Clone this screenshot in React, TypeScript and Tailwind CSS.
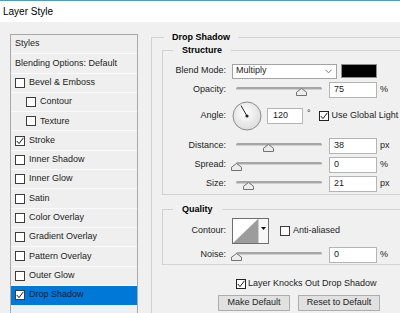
import React from 'react';

type Item = { label: string; check?: boolean; sub?: boolean; active?: boolean };

const items: Item[] = [
  { label: 'Styles' },
  { label: 'Blending Options: Default' },
  { label: 'Bevel & Emboss', check: false },
  { label: 'Contour', check: false, sub: true },
  { label: 'Texture', check: false, sub: true },
  { label: 'Stroke', check: true },
  { label: 'Inner Shadow', check: false },
  { label: 'Inner Glow', check: false },
  { label: 'Satin', check: false },
  { label: 'Color Overlay', check: false },
  { label: 'Gradient Overlay', check: false },
  { label: 'Pattern Overlay', check: false },
  { label: 'Outer Glow', check: false },
  { label: 'Drop Shadow', check: true, active: true },
];

function Check({ checked, className = '' }: { checked?: boolean; className?: string }) {
  return (
    <span className={`flex h-[10px] w-[10px] shrink-0 items-center justify-center border border-[#3c3c3c] bg-white ${className}`}>
      {checked && (
        <svg width="8" height="8" viewBox="0 0 8 8">
          <path d="M0.8 4 L3 6.6 L7.4 0.8" fill="none" stroke="#1e1e1e" strokeWidth="1" />
        </svg>
      )}
    </span>
  );
}

function Slider({ pos }: { pos: number }) {
  return (
    <div className="relative h-[16px] w-[94px] shrink-0 pt-[5px]">
      <div className="mx-[4px] h-[3px] rounded-full border-b border-[#cfcfcf] bg-[#a6a6a6]" />
      <svg className="absolute top-[6px]" style={{ left: pos - 5 }} width="11" height="8" viewBox="0 0 11 8">
        <path d="M5.5 0.5 L10.5 4.2 V7.5 H0.5 V4.2 Z" fill="#ececec" stroke="#727272" />
      </svg>
    </div>
  );
}

function Field({ value, w = 'w-[48px]' }: { value: string; w?: string }) {
  return (
    <div className={`ml-[3px] flex h-[16px] ${w} shrink-0 items-center border border-[#b4b4b4] bg-white pl-[4px]`}>
      {value}
    </div>
  );
}

function Label({ text }: { text: string }) {
  return <div className="w-[64px] shrink-0 pr-[1px] text-right">{text}</div>;
}

function SliderRow({ label, pos, value, unit, className = '' }: { label: string; pos: number; value: string; unit: string; className?: string }) {
  return (
    <div className={`flex h-[16px] items-center ${className}`}>
      <Label text={label} />
      <div className="ml-[5px]">
        <Slider pos={pos} />
      </div>
      <Field value={value} />
      <span className="ml-[3px]">{unit}</span>
    </div>
  );
}

export default function App() {
  return (
    <div className="h-[313px] w-[400px] overflow-hidden bg-[#f0f0f0] font-['Liberation_Sans',Arial,sans-serif] text-[9px] text-[#1c1c1c]">
      <div className="flex h-[22px] items-center border-t border-[#4f9fb1] bg-white pl-[3px] text-[10px] text-black">
        Layer Style
      </div>

      <div className="flex">
        {/* styles list */}
        <div className="ml-[10px] mt-[12px] h-[300px] w-[128px] shrink-0 border-l border-r border-t border-[#a9a9a9] bg-[#efefef]">
          {items.map((it) => (
            <div
              key={it.label}
              className={`flex h-[19.3px] items-center border-b ${
                it.active ? 'border-[#0078d7] bg-[#0078d7] text-[#10203a]' : 'border-[#fbfbfb]'
              } ${it.sub ? 'pl-[15px]' : 'pl-[4px]'}`}
            >
              {it.check !== undefined && <Check checked={it.check} className="mr-[4px]" />}
              <span>{it.label}</span>
            </div>
          ))}
        </div>

        {/* drop shadow panel */}
        <fieldset className="ml-[13px] mt-[9px] h-[320px] w-[280px] shrink-0 border border-[#d2d2d2] p-0">
          <legend className="ml-[12px] px-[8px] text-[9px] font-bold leading-[12px] text-black">Drop Shadow</legend>
          <div className="pl-[10px]">
            <fieldset className="mt-[1px] w-[260px] border border-[#d2d2d2] p-0 pb-[2px]">
              <legend className="ml-[10px] px-[9px] font-bold leading-[12px] text-black">Structure</legend>

              <div className="mt-[7px] flex h-[16px] items-center">
                <Label text="Blend Mode:" />
                <div className="ml-[5px] flex h-[15px] w-[105px] items-center justify-between border border-[#a3a3a3] bg-white pl-[3px] pr-[4px]">
                  <span>Multiply</span>
                  <svg width="7" height="5" viewBox="0 0 7 5">
                    <path d="M0.5 0.8 L3.5 3.8 L6.5 0.8" fill="none" stroke="#7a7a7a" />
                  </svg>
                </div>
                <div className="ml-[4px] h-[14px] w-[36px] border border-[#8c8c8c] bg-black" />
              </div>

              <SliderRow label="Opacity:" pos={69} value="75" unit="%" className="mt-[3px]" />

              <div className="mt-[3px] flex h-[30px] items-center">
                <Label text="Angle:" />
                <svg className="ml-[5px] shrink-0" width="30" height="30" viewBox="0 0 30 30">
                  <defs>
                    <radialGradient id="dial" cx="45%" cy="40%" r="65%">
                      <stop offset="0%" stopColor="#ffffff" />
                      <stop offset="100%" stopColor="#dadada" />
                    </radialGradient>
                  </defs>
                  <circle cx="15" cy="15" r="14" fill="url(#dial)" stroke="#8a8a8a" />
                  <line x1="15" y1="15" x2="9" y2="4.6" stroke="#2a2a2a" strokeWidth="1" />
                  <circle cx="15" cy="15" r="1.6" fill="#222" />
                </svg>
                <div className="ml-[5px] flex h-[16px] w-[36px] items-center border border-[#b4b4b4] bg-white pl-[5px]">120</div>
                <span className="ml-[4px] self-start pt-[6px] text-[9px]">°</span>
                <Check checked className="ml-[8px] border-[#222]" />
                <span className="ml-[3px]">Use Global Light</span>
              </div>

              <SliderRow label="Distance:" pos={36} value="38" unit="px" className="mt-[7px]" />
              <SliderRow label="Spread:" pos={4} value="0" unit="%" className="mt-[3px]" />
              <SliderRow label="Size:" pos={16} value="21" unit="px" className="mt-[3px]" />
            </fieldset>

            <fieldset className="mt-[8px] w-[260px] border border-[#d2d2d2] p-0 pb-[1px]">
              <legend className="ml-[10px] px-[9px] font-bold leading-[12px] text-black">Quality</legend>

              <div className="mt-[3px] flex h-[26px] items-center">
                <Label text="Contour:" />
                <div className="ml-[5px] flex h-[26px] w-[37px] border border-[#6e6e6e] bg-white">
                  <svg width="25" height="24" viewBox="0 0 25 24" className="shrink-0">
                    <polygon points="0,24 25,0 25,24" fill="#9c9c9c" />
                  </svg>
                  <div className="flex w-[10px] justify-center border-l border-[#cfcfcf] bg-[#f7f7f7] pt-[8px]">
                    <svg width="5" height="3" viewBox="0 0 5 3">
                      <path d="M0 0 H5 L2.5 3 Z" fill="#111" />
                    </svg>
                  </div>
                </div>
                <Check className="ml-[11px]" />
                <span className="ml-[3px]">Anti-aliased</span>
              </div>

              <SliderRow label="Noise:" pos={4} value="0" unit="%" className="mt-[3px]" />
            </fieldset>

            <div className="ml-[74px] mt-[13px] flex h-[12px] items-center">
              <Check checked className="border-[#222]" />
              <span className="ml-[2px]">Layer Knocks Out Drop Shadow</span>
            </div>

            <div className="ml-[56px] mt-[5px] flex">
              <div className="flex h-[16px] w-[72px] items-center justify-center border border-[#adadad] bg-[#e1e1e1]">Make Default</div>
              <div className="ml-[8px] flex h-[16px] w-[82px] items-center justify-center border border-[#adadad] bg-[#e1e1e1]">Reset to Default</div>
            </div>
          </div>
        </fieldset>
      </div>
    </div>
  );
}
